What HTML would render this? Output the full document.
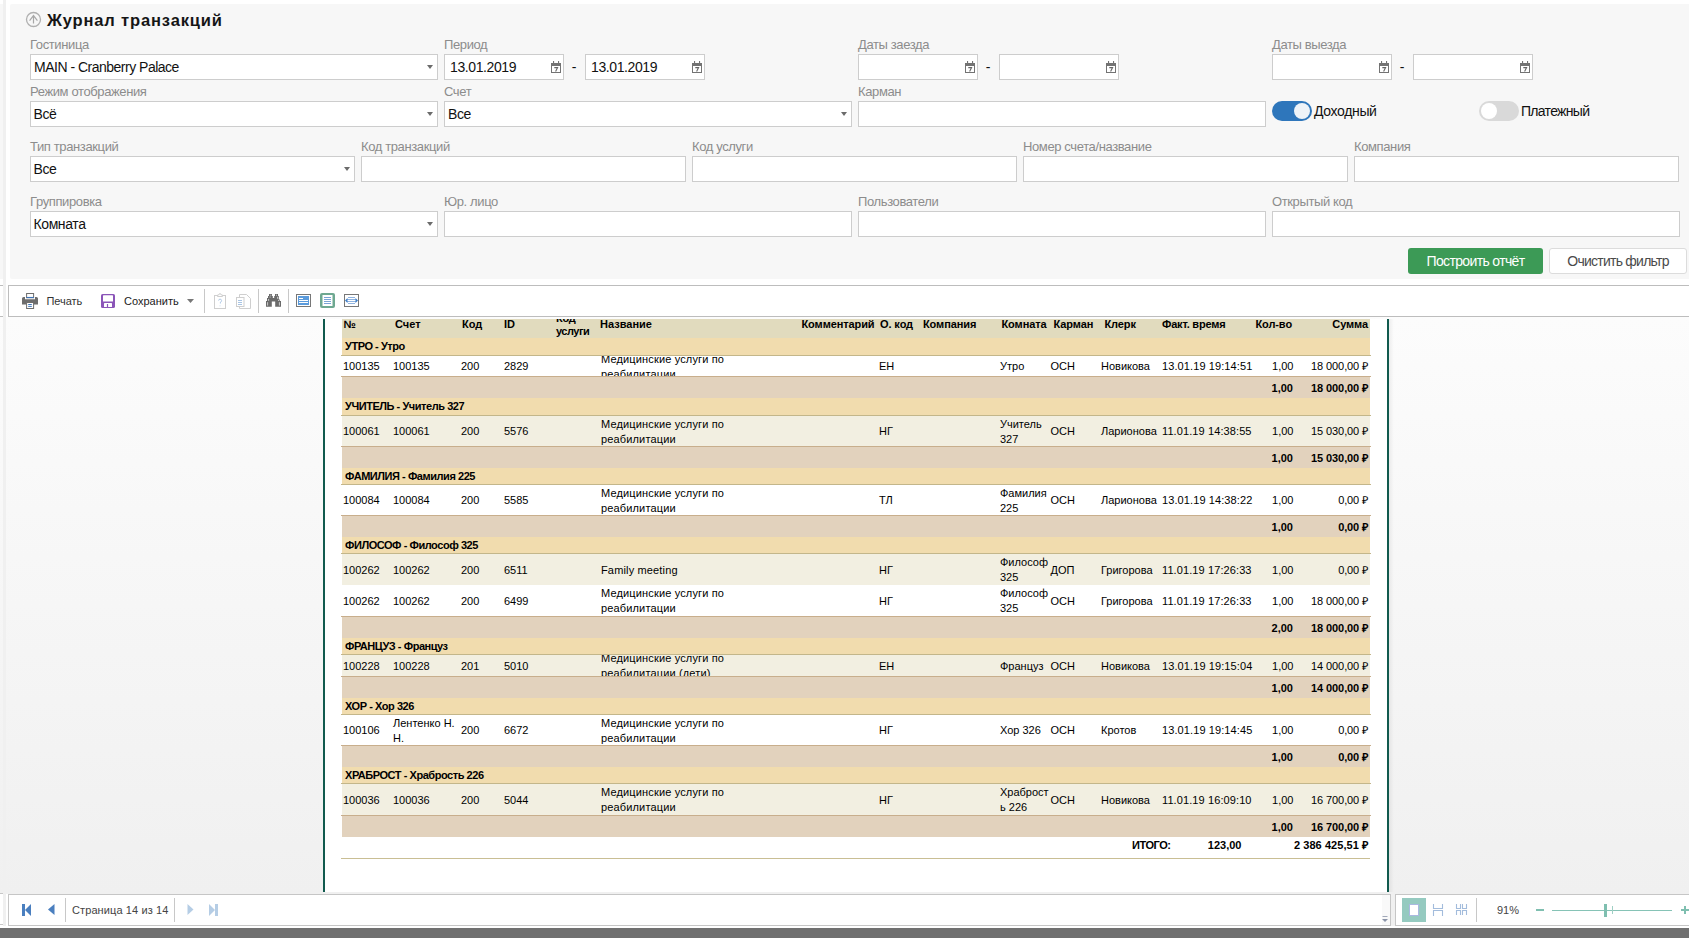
<!DOCTYPE html>
<html><head><meta charset="utf-8"><title>Журнал транзакций</title>
<style>
html,body{margin:0;padding:0;}
body{width:1689px;height:938px;overflow:hidden;position:relative;background:#fff;font-family:"Liberation Sans",sans-serif;}
.t{position:absolute;white-space:nowrap;}
.r{position:absolute;box-sizing:border-box;}
svg{position:absolute;overflow:visible;}
</style></head><body>

<div class="r" style="left:0px;top:4px;width:3px;height:275px;background:#f7f7f7"></div>
<div class="r" style="left:3px;top:0px;width:3px;height:938px;background:#f0f0f0"></div>
<div class="r" style="left:0px;top:317px;width:3px;height:577px;background:linear-gradient(#fcfcfc,#f0f0f0)"></div>
<div class="r" style="left:0px;top:285px;width:3px;height:1px;background:#bdbdbd"></div>
<div class="r" style="left:0px;top:316px;width:3px;height:1px;background:#bdbdbd"></div>
<div class="r" style="left:0px;top:893px;width:3px;height:1px;background:#c6c6c6"></div>
<div class="r" style="left:0px;top:924px;width:3px;height:1px;background:#c6c6c6"></div>
<div class="r" style="left:10px;top:4px;width:1679px;height:275px;background:#f7f7f7;border-radius:2px 0 0 2px"></div>
<svg style="left:25px;top:11px" width="17" height="17" viewBox="0 0 17 17"><circle cx="8.5" cy="8.5" r="7" fill="none" stroke="#b0b0b0" stroke-width="1.3"/><path d="M8.5 4.6V12.5 M4.6 9.6 L8.5 4.6 L12.4 9.6" fill="none" stroke="#a8a8a8" stroke-width="1.2"/></svg>
<div class="t" style="left:47px;top:9.78px;font-size:16.5px;line-height:21px;font-weight:700;color:#151515;letter-spacing:0.85px;">Журнал транзакций</div>
<div class="t" style="left:30px;top:36.00px;font-size:13px;line-height:17px;font-weight:400;color:#8c8c8c;letter-spacing:-0.38px;">Гостиница</div>
<div class="r" style="left:30px;top:54px;width:408px;height:26px;background:#fff;border:1px solid #cdcdcd"></div>
<svg style="left:427px;top:64.5px" width="6" height="4" viewBox="0 0 6 4"><path d="M0 0H6L3 4Z" fill="#6b6b6b"/></svg>
<div class="t" style="left:34px;top:58.15px;font-size:14px;line-height:18px;font-weight:400;color:#111;letter-spacing:-0.5px;">MAIN - Cranberry Palace</div>
<div class="t" style="left:444px;top:36.00px;font-size:13px;line-height:17px;font-weight:400;color:#8c8c8c;letter-spacing:-0.38px;">Период</div>
<div class="r" style="left:444px;top:54px;width:120px;height:26px;background:#fff;border:1px solid #cdcdcd"></div>
<div class="t" style="left:450px;top:58.15px;font-size:14px;line-height:18px;font-weight:400;color:#111;letter-spacing:-0.4px;">13.01.2019</div>
<svg style="left:551px;top:61px" width="10" height="12" viewBox="0 0 10 12"><rect x="0.5" y="2.5" width="9" height="9" fill="none" stroke="#737373" stroke-width="1"/><rect x="0" y="3" width="10" height="2" fill="#737373"/><rect x="2" y="0" width="1.1" height="3" fill="#737373"/><rect x="7" y="0" width="1.1" height="3" fill="#737373"/><rect x="4.5" y="2" width="1" height="1" fill="#737373"/><path d="M3.3 6.6H6.6L4.6 10.6" fill="none" stroke="#666" stroke-width="1.1"/></svg>
<div class="t" style="left:274px;width:600px;text-align:center;top:58.15px;font-size:14px;line-height:18px;font-weight:400;color:#111;letter-spacing:0px;">-</div>
<div class="r" style="left:585px;top:54px;width:120px;height:26px;background:#fff;border:1px solid #cdcdcd"></div>
<div class="t" style="left:591px;top:58.15px;font-size:14px;line-height:18px;font-weight:400;color:#111;letter-spacing:-0.4px;">13.01.2019</div>
<svg style="left:692px;top:61px" width="10" height="12" viewBox="0 0 10 12"><rect x="0.5" y="2.5" width="9" height="9" fill="none" stroke="#737373" stroke-width="1"/><rect x="0" y="3" width="10" height="2" fill="#737373"/><rect x="2" y="0" width="1.1" height="3" fill="#737373"/><rect x="7" y="0" width="1.1" height="3" fill="#737373"/><rect x="4.5" y="2" width="1" height="1" fill="#737373"/><path d="M3.3 6.6H6.6L4.6 10.6" fill="none" stroke="#666" stroke-width="1.1"/></svg>
<div class="t" style="left:858px;top:36.00px;font-size:13px;line-height:17px;font-weight:400;color:#8c8c8c;letter-spacing:-0.38px;">Даты заезда</div>
<div class="r" style="left:858px;top:54px;width:120px;height:26px;background:#fff;border:1px solid #cdcdcd"></div>
<svg style="left:965px;top:61px" width="10" height="12" viewBox="0 0 10 12"><rect x="0.5" y="2.5" width="9" height="9" fill="none" stroke="#737373" stroke-width="1"/><rect x="0" y="3" width="10" height="2" fill="#737373"/><rect x="2" y="0" width="1.1" height="3" fill="#737373"/><rect x="7" y="0" width="1.1" height="3" fill="#737373"/><rect x="4.5" y="2" width="1" height="1" fill="#737373"/><path d="M3.3 6.6H6.6L4.6 10.6" fill="none" stroke="#666" stroke-width="1.1"/></svg>
<div class="t" style="left:688px;width:600px;text-align:center;top:58.15px;font-size:14px;line-height:18px;font-weight:400;color:#111;letter-spacing:0px;">-</div>
<div class="r" style="left:999px;top:54px;width:120px;height:26px;background:#fff;border:1px solid #cdcdcd"></div>
<svg style="left:1106px;top:61px" width="10" height="12" viewBox="0 0 10 12"><rect x="0.5" y="2.5" width="9" height="9" fill="none" stroke="#737373" stroke-width="1"/><rect x="0" y="3" width="10" height="2" fill="#737373"/><rect x="2" y="0" width="1.1" height="3" fill="#737373"/><rect x="7" y="0" width="1.1" height="3" fill="#737373"/><rect x="4.5" y="2" width="1" height="1" fill="#737373"/><path d="M3.3 6.6H6.6L4.6 10.6" fill="none" stroke="#666" stroke-width="1.1"/></svg>
<div class="t" style="left:1272px;top:36.00px;font-size:13px;line-height:17px;font-weight:400;color:#8c8c8c;letter-spacing:-0.38px;">Даты выезда</div>
<div class="r" style="left:1272px;top:54px;width:120px;height:26px;background:#fff;border:1px solid #cdcdcd"></div>
<svg style="left:1379px;top:61px" width="10" height="12" viewBox="0 0 10 12"><rect x="0.5" y="2.5" width="9" height="9" fill="none" stroke="#737373" stroke-width="1"/><rect x="0" y="3" width="10" height="2" fill="#737373"/><rect x="2" y="0" width="1.1" height="3" fill="#737373"/><rect x="7" y="0" width="1.1" height="3" fill="#737373"/><rect x="4.5" y="2" width="1" height="1" fill="#737373"/><path d="M3.3 6.6H6.6L4.6 10.6" fill="none" stroke="#666" stroke-width="1.1"/></svg>
<div class="t" style="left:1102px;width:600px;text-align:center;top:58.15px;font-size:14px;line-height:18px;font-weight:400;color:#111;letter-spacing:0px;">-</div>
<div class="r" style="left:1413px;top:54px;width:120px;height:26px;background:#fff;border:1px solid #cdcdcd"></div>
<svg style="left:1520px;top:61px" width="10" height="12" viewBox="0 0 10 12"><rect x="0.5" y="2.5" width="9" height="9" fill="none" stroke="#737373" stroke-width="1"/><rect x="0" y="3" width="10" height="2" fill="#737373"/><rect x="2" y="0" width="1.1" height="3" fill="#737373"/><rect x="7" y="0" width="1.1" height="3" fill="#737373"/><rect x="4.5" y="2" width="1" height="1" fill="#737373"/><path d="M3.3 6.6H6.6L4.6 10.6" fill="none" stroke="#666" stroke-width="1.1"/></svg>
<div class="t" style="left:30px;top:83.00px;font-size:13px;line-height:17px;font-weight:400;color:#8c8c8c;letter-spacing:-0.38px;">Режим отображения</div>
<div class="r" style="left:30px;top:101px;width:408px;height:26px;background:#fff;border:1px solid #cdcdcd"></div>
<svg style="left:427px;top:111.5px" width="6" height="4" viewBox="0 0 6 4"><path d="M0 0H6L3 4Z" fill="#6b6b6b"/></svg>
<div class="t" style="left:33.5px;top:105.15px;font-size:14px;line-height:18px;font-weight:400;color:#111;letter-spacing:-0.4px;">Всё</div>
<div class="t" style="left:444px;top:83.00px;font-size:13px;line-height:17px;font-weight:400;color:#8c8c8c;letter-spacing:-0.38px;">Счет</div>
<div class="r" style="left:444px;top:101px;width:408px;height:26px;background:#fff;border:1px solid #cdcdcd"></div>
<svg style="left:841px;top:111.5px" width="6" height="4" viewBox="0 0 6 4"><path d="M0 0H6L3 4Z" fill="#6b6b6b"/></svg>
<div class="t" style="left:448px;top:105.15px;font-size:14px;line-height:18px;font-weight:400;color:#111;letter-spacing:-0.4px;">Все</div>
<div class="t" style="left:858px;top:83.00px;font-size:13px;line-height:17px;font-weight:400;color:#8c8c8c;letter-spacing:-0.38px;">Карман</div>
<div class="r" style="left:858px;top:101px;width:408px;height:26px;background:#fff;border:1px solid #cdcdcd"></div>
<div class="r" style="left:1272px;top:101px;width:40px;height:20px;background:#2e76bb;border-radius:10px"></div>
<div class="r" style="left:1294px;top:103px;width:16px;height:16px;background:#eef3f8;border-radius:50%"></div>
<div class="t" style="left:1314px;top:102.15px;font-size:14px;line-height:18px;font-weight:400;color:#111;letter-spacing:-0.35px;">Доходный</div>
<div class="r" style="left:1479px;top:101px;width:40px;height:20px;background:#d9d9d9;border-radius:10px"></div>
<div class="r" style="left:1481px;top:103px;width:16px;height:16px;background:#fff;border-radius:50%"></div>
<div class="t" style="left:1521px;top:102.15px;font-size:14px;line-height:18px;font-weight:400;color:#111;letter-spacing:-0.7px;">Платежный</div>
<div class="t" style="left:30px;top:138.00px;font-size:13px;line-height:17px;font-weight:400;color:#8c8c8c;letter-spacing:-0.38px;">Тип транзакций</div>
<div class="r" style="left:30px;top:156px;width:325px;height:26px;background:#fff;border:1px solid #cdcdcd"></div>
<svg style="left:344px;top:166.5px" width="6" height="4" viewBox="0 0 6 4"><path d="M0 0H6L3 4Z" fill="#6b6b6b"/></svg>
<div class="t" style="left:33.5px;top:160.15px;font-size:14px;line-height:18px;font-weight:400;color:#111;letter-spacing:-0.4px;">Все</div>
<div class="t" style="left:361px;top:138.00px;font-size:13px;line-height:17px;font-weight:400;color:#8c8c8c;letter-spacing:-0.38px;">Код транзакций</div>
<div class="r" style="left:361px;top:156px;width:325px;height:26px;background:#fff;border:1px solid #cdcdcd"></div>
<div class="t" style="left:692px;top:138.00px;font-size:13px;line-height:17px;font-weight:400;color:#8c8c8c;letter-spacing:-0.38px;">Код услуги</div>
<div class="r" style="left:692px;top:156px;width:325px;height:26px;background:#fff;border:1px solid #cdcdcd"></div>
<div class="t" style="left:1023px;top:138.00px;font-size:13px;line-height:17px;font-weight:400;color:#8c8c8c;letter-spacing:-0.38px;">Номер счета/название</div>
<div class="r" style="left:1023px;top:156px;width:325px;height:26px;background:#fff;border:1px solid #cdcdcd"></div>
<div class="t" style="left:1354px;top:138.00px;font-size:13px;line-height:17px;font-weight:400;color:#8c8c8c;letter-spacing:-0.38px;">Компания</div>
<div class="r" style="left:1354px;top:156px;width:325px;height:26px;background:#fff;border:1px solid #cdcdcd"></div>
<div class="t" style="left:30px;top:193.00px;font-size:13px;line-height:17px;font-weight:400;color:#8c8c8c;letter-spacing:-0.38px;">Группировка</div>
<div class="r" style="left:30px;top:211px;width:408px;height:26px;background:#fff;border:1px solid #cdcdcd"></div>
<svg style="left:427px;top:221.5px" width="6" height="4" viewBox="0 0 6 4"><path d="M0 0H6L3 4Z" fill="#6b6b6b"/></svg>
<div class="t" style="left:33.5px;top:215.15px;font-size:14px;line-height:18px;font-weight:400;color:#111;letter-spacing:-0.4px;">Комната</div>
<div class="t" style="left:444px;top:193.00px;font-size:13px;line-height:17px;font-weight:400;color:#8c8c8c;letter-spacing:-0.38px;">Юр. лицо</div>
<div class="r" style="left:444px;top:211px;width:408px;height:26px;background:#fff;border:1px solid #cdcdcd"></div>
<div class="t" style="left:858px;top:193.00px;font-size:13px;line-height:17px;font-weight:400;color:#8c8c8c;letter-spacing:-0.38px;">Пользователи</div>
<div class="r" style="left:858px;top:211px;width:408px;height:26px;background:#fff;border:1px solid #cdcdcd"></div>
<div class="t" style="left:1272px;top:193.00px;font-size:13px;line-height:17px;font-weight:400;color:#8c8c8c;letter-spacing:-0.38px;">Открытый код</div>
<div class="r" style="left:1272px;top:211px;width:408px;height:26px;background:#fff;border:1px solid #cdcdcd"></div>
<div class="r" style="left:1408px;top:248px;width:135px;height:26px;background:#3c9a56;border-radius:3px"></div>
<div class="t" style="left:1175.5px;width:600px;text-align:center;top:252.15px;font-size:14px;line-height:18px;font-weight:400;color:#fff;letter-spacing:-0.64px;">Построить отчёт</div>
<div class="r" style="left:1549px;top:248px;width:138px;height:26px;background:#fff;border:1px solid #dcdcdc;border-radius:3px"></div>
<div class="t" style="left:1318px;width:600px;text-align:center;top:252.15px;font-size:14px;line-height:18px;font-weight:400;color:#4a4a4a;letter-spacing:-0.75px;">Очистить фильтр</div>
<div class="r" style="left:8px;top:285px;width:1693px;height:32px;background:#fff;border:1px solid #bdbdbd"></div>
<svg style="left:22px;top:293px" width="16" height="16" viewBox="0 0 16 16"><path d="M0 11.6V5.6Q0 4 1.6 4H3V6.2H13V4H14.4Q16 4 16 5.6V11.6Z" fill="#6d6d6d"/><rect x="4.6" y="0.5" width="7" height="4.2" fill="#fff" stroke="#6d6d6d" stroke-width="1"/><path d="M4.4 4.5H11.8" stroke="#3d74b8" stroke-width="1.1"/><rect x="4.6" y="9.5" width="7" height="6" fill="#fff" stroke="#6d6d6d" stroke-width="1"/><path d="M6.2 11.5H9.8 M6.2 13.4H9.8" stroke="#3d74b8" stroke-width="1"/></svg>
<div class="t" style="left:46.5px;top:294.19px;font-size:11px;line-height:14px;font-weight:400;color:#333;letter-spacing:-0.05px;">Печать</div>
<svg style="left:101px;top:294px" width="14" height="14" viewBox="0 0 14 14"><rect x="0" y="0" width="14" height="14" rx="1.6" fill="#8b55b8"/><rect x="2" y="1.2" width="10" height="6.4" rx="0.6" fill="#fff"/><rect x="3" y="9" width="8" height="4" rx="0.5" fill="#fff"/><rect x="5.9" y="10" width="1.2" height="3" fill="#8b55b8"/></svg>
<div class="t" style="left:124px;top:294.19px;font-size:11px;line-height:14px;font-weight:400;color:#222;letter-spacing:0px;">Сохранить</div>
<svg style="left:187px;top:299px" width="7" height="4" viewBox="0 0 7 4"><path d="M0 0H7L3.5 4Z" fill="#777"/></svg>
<div class="r" style="left:204px;top:289px;width:1px;height:24px;background:#c8c8c8"></div>
<svg style="left:214px;top:293px" width="12" height="16" viewBox="0 0 12 16"><rect x="0.5" y="2.5" width="11" height="13" fill="#fff" stroke="#cfcfcf" stroke-width="1"/><path d="M3.5 3.5H8.5V2H7.3A1.3 1.3 0 0 0 4.7 2H3.5Z" fill="#fff" stroke="#cfcfcf" stroke-width="1"/><path d="M4.6 7.6A1.5 1.5 0 1 1 6.4 9.1V10.5 M6 12.6V13.2" fill="none" stroke="#a8c4e4" stroke-width="0.9"/></svg>
<svg style="left:236px;top:294px" width="15" height="15" viewBox="0 0 15 15"><path d="M3.5 0.5H10.5L14.5 4.5V14.5H3.5Z" fill="#fff" stroke="#cfcfcf" stroke-width="1"/><rect x="0.5" y="3.5" width="7.5" height="9" fill="#fff" stroke="#cfcfcf" stroke-width="1"/><path d="M2 6.5H6 M2 8.5H6 M2 10.5H6" stroke="#a8c4e4" stroke-width="1"/></svg>
<div class="r" style="left:258px;top:289px;width:1px;height:24px;background:#c8c8c8"></div>
<svg style="left:266px;top:294px" width="15" height="13" viewBox="0 0 15 13"><path d="M0 12.7V7H1V4H2V2H3V0H6V2H6.8V4H8.2V2H9V0H12V2H12.8V5.5H13.8V7H15V12.7H9.2V7.6H5.8V12.7Z" fill="#6a6a6a"/><path d="M1.6 8.2V11.6 M2.6 5V6.8 M13.4 8.2V11.6 M11.6 2.8V4.8" stroke="#d8d8d8" stroke-width="0.9"/><rect x="3.6" y="2.6" width="1" height="1" fill="#d0d0d0"/><rect x="4.3" y="0.7" width="1" height="1" fill="#d0d0d0"/><rect x="10" y="0.7" width="1" height="1" fill="#d0d0d0"/><rect x="12.1" y="6" width="1" height="1" fill="#d0d0d0"/></svg>
<div class="r" style="left:288px;top:289px;width:1px;height:24px;background:#c8c8c8"></div>
<svg style="left:296px;top:294px" width="15" height="13" viewBox="0 0 15 13"><rect x="0.5" y="0.5" width="14" height="12" fill="#fff" stroke="#777" stroke-width="1"/><rect x="2" y="2" width="11" height="9" fill="#5b9bdc"/><path d="M3 4.5H7 M3 6.5H12 M3 8.5H12" stroke="#fff" stroke-width="1"/></svg>
<svg style="left:320px;top:293px" width="15" height="15" viewBox="0 0 15 15"><rect x="0" y="0" width="15" height="15" rx="2" fill="#6ea891"/><rect x="2.5" y="2" width="10" height="11" fill="#fff"/><path d="M4 4.5H11 M4 6.5H11 M4 8.5H11 M4 10.5H11" stroke="#7aa4d6" stroke-width="1"/></svg>
<svg style="left:344px;top:294px" width="15" height="13" viewBox="0 0 15 13"><rect x="0.5" y="0.5" width="14" height="12" fill="#fff" stroke="#777" stroke-width="1"/><path d="M4 3.5H11 M3 5.5H12 M3 7.5H12 M4 9.5H11" stroke="#8fb3e0" stroke-width="1"/><path d="M1 6.5L3.5 4V9Z M14 6.5L11.5 4V9Z" fill="#3f7fc9"/></svg>
<div class="r" style="left:6px;top:317px;width:1683px;height:577px;background:linear-gradient(#fcfcfc,#f0f0f0)"></div>
<div class="r" style="left:1389px;top:319px;width:5px;height:573px;background:linear-gradient(90deg,rgba(0,0,0,0.06),rgba(0,0,0,0))"></div>
<div class="r" style="left:323px;top:319px;width:1066px;height:573px;background:#fff;border-left:2px solid #115a4e;border-right:2px solid #115a4e"></div>
<div class="r" style="left:342px;top:319px;width:1028px;height:19px;background:#e1dbbe"></div>
<div class="t" style="left:343.5px;top:317.19px;font-size:11px;line-height:14px;font-weight:700;color:#000;letter-spacing:0px;">№</div>
<div class="t" style="left:395px;top:317.19px;font-size:11px;line-height:14px;font-weight:700;color:#000;letter-spacing:0px;">Счет</div>
<div class="t" style="left:462px;top:317.19px;font-size:11px;line-height:14px;font-weight:700;color:#000;letter-spacing:0px;">Код</div>
<div class="t" style="left:504px;top:317.19px;font-size:11px;line-height:14px;font-weight:700;color:#000;letter-spacing:0px;">ID</div>
<div style="position:absolute;left:550px;top:319px;width:46px;height:19px;overflow:hidden">
<div class="t" style="left:6px;top:-8.21px;font-size:11px;line-height:14px;font-weight:700;color:#000;letter-spacing:-0.3px;">Код</div>
</div>
<div class="t" style="left:556px;top:323.79px;font-size:11px;line-height:14px;font-weight:700;color:#000;letter-spacing:-0.5px;">услуги</div>
<div class="t" style="left:600px;top:317.19px;font-size:11px;line-height:14px;font-weight:700;color:#000;letter-spacing:0px;">Название</div>
<div class="t" style="left:801.5px;top:317.19px;font-size:11px;line-height:14px;font-weight:700;color:#000;letter-spacing:-0.1px;">Комментарий</div>
<div class="t" style="left:880px;top:317.19px;font-size:11px;line-height:14px;font-weight:700;color:#000;letter-spacing:-0.1px;">О. код</div>
<div class="t" style="left:923px;top:317.19px;font-size:11px;line-height:14px;font-weight:700;color:#000;letter-spacing:-0.1px;">Компания</div>
<div class="t" style="left:1001.5px;top:317.19px;font-size:11px;line-height:14px;font-weight:700;color:#000;letter-spacing:-0.1px;">Комната</div>
<div class="t" style="left:1053.5px;top:317.19px;font-size:11px;line-height:14px;font-weight:700;color:#000;letter-spacing:-0.1px;">Карман</div>
<div class="t" style="left:1104.5px;top:317.19px;font-size:11px;line-height:14px;font-weight:700;color:#000;letter-spacing:-0.1px;">Клерк</div>
<div class="t" style="left:1162px;top:317.19px;font-size:11px;line-height:14px;font-weight:700;color:#000;letter-spacing:-0.2px;">Факт. время</div>
<div class="t" style="right:397px;top:317.19px;font-size:11px;line-height:14px;font-weight:700;color:#000;letter-spacing:-0.1px;">Кол-во</div>
<div class="t" style="right:321px;top:317.19px;font-size:11px;line-height:14px;font-weight:700;color:#000;letter-spacing:-0.1px;">Сумма</div>
<div class="r" style="left:342px;top:338px;width:1028px;height:18px;background:#f1dcae"></div>
<div class="r" style="left:341px;top:355px;width:1030px;height:1px;background:#c3b68a"></div>
<div class="t" style="left:345px;top:339.39px;font-size:11px;line-height:14px;font-weight:700;color:#000;letter-spacing:-0.45px;">УТРО - Утро</div>
<div class="r" style="left:342px;top:356px;width:1028px;height:21px;background:#fff"></div>
<div class="r" style="left:341px;top:376px;width:1030px;height:1px;background:#c8ae8c"></div>
<div class="t" style="left:343px;top:359.19px;font-size:11px;line-height:14px;font-weight:400;color:#000;letter-spacing:0px;">100135</div>
<div class="t" style="left:393px;top:359.19px;font-size:11px;line-height:14px;font-weight:400;color:#000;letter-spacing:0px;">100135</div>
<div class="t" style="left:461px;top:359.19px;font-size:11px;line-height:14px;font-weight:400;color:#000;letter-spacing:0px;">200</div>
<div class="t" style="left:504px;top:359.19px;font-size:11px;line-height:14px;font-weight:400;color:#000;letter-spacing:0px;">2829</div>
<div style="position:absolute;left:598px;top:356px;width:200px;height:20px;overflow:hidden">
<div class="t" style="left:3px;top:-4.31px;font-size:11px;line-height:14px;font-weight:400;color:#000;letter-spacing:0.15px;">Медицинские услуги по</div>
<div class="t" style="left:3px;top:10.69px;font-size:11px;line-height:14px;font-weight:400;color:#000;letter-spacing:0.15px;">реабилитации</div>
</div>
<div class="t" style="left:879px;top:359.19px;font-size:11px;line-height:14px;font-weight:400;color:#000;letter-spacing:0px;">ЕН</div>
<div class="t" style="left:1000px;top:359.19px;font-size:11px;line-height:14px;font-weight:400;color:#000;letter-spacing:0px;">Утро</div>
<div class="t" style="left:1050.5px;top:359.19px;font-size:11px;line-height:14px;font-weight:400;color:#000;letter-spacing:0px;">ОСН</div>
<div class="t" style="left:1101px;top:359.19px;font-size:11px;line-height:14px;font-weight:400;color:#000;letter-spacing:0px;">Новикова</div>
<div class="t" style="left:1162px;top:359.19px;font-size:11px;line-height:14px;font-weight:400;color:#000;letter-spacing:0.1px;">13.01.19 19:14:51</div>
<div class="t" style="right:395.5px;top:359.19px;font-size:11px;line-height:14px;font-weight:400;color:#000;letter-spacing:0px;">1,00</div>
<div class="t" style="right:321px;top:359.19px;font-size:11px;line-height:14px;font-weight:400;color:#000;letter-spacing:-0.1px;">18 000,00 ₽</div>
<div class="r" style="left:342px;top:377px;width:1028px;height:21px;background:#e2d2bd"></div>
<div class="t" style="right:396px;top:381.19px;font-size:11px;line-height:14px;font-weight:700;color:#000;letter-spacing:0px;">1,00</div>
<div class="t" style="right:321px;top:381.19px;font-size:11px;line-height:14px;font-weight:700;color:#000;letter-spacing:-0.1px;">18 000,00 ₽</div>
<div class="r" style="left:342px;top:398px;width:1028px;height:18px;background:#f1dcae"></div>
<div class="r" style="left:341px;top:415px;width:1030px;height:1px;background:#c3b68a"></div>
<div class="t" style="left:345px;top:399.39px;font-size:11px;line-height:14px;font-weight:700;color:#000;letter-spacing:-0.45px;">УЧИТЕЛЬ - Учитель 327</div>
<div class="r" style="left:342px;top:416px;width:1028px;height:31px;background:#f2efe1"></div>
<div class="r" style="left:341px;top:446px;width:1030px;height:1px;background:#c8ae8c"></div>
<div class="t" style="left:343px;top:424.19px;font-size:11px;line-height:14px;font-weight:400;color:#000;letter-spacing:0px;">100061</div>
<div class="t" style="left:393px;top:424.19px;font-size:11px;line-height:14px;font-weight:400;color:#000;letter-spacing:0px;">100061</div>
<div class="t" style="left:461px;top:424.19px;font-size:11px;line-height:14px;font-weight:400;color:#000;letter-spacing:0px;">200</div>
<div class="t" style="left:504px;top:424.19px;font-size:11px;line-height:14px;font-weight:400;color:#000;letter-spacing:0px;">5576</div>
<div class="t" style="left:601px;top:416.69px;font-size:11px;line-height:14px;font-weight:400;color:#000;letter-spacing:0.15px;">Медицинские услуги по</div>
<div class="t" style="left:601px;top:431.69px;font-size:11px;line-height:14px;font-weight:400;color:#000;letter-spacing:0.15px;">реабилитации</div>
<div class="t" style="left:879px;top:424.19px;font-size:11px;line-height:14px;font-weight:400;color:#000;letter-spacing:0px;">НГ</div>
<div class="t" style="left:1000px;top:416.69px;font-size:11px;line-height:14px;font-weight:400;color:#000;letter-spacing:0px;">Учитель</div>
<div class="t" style="left:1000px;top:431.69px;font-size:11px;line-height:14px;font-weight:400;color:#000;letter-spacing:0px;">327</div>
<div class="t" style="left:1050.5px;top:424.19px;font-size:11px;line-height:14px;font-weight:400;color:#000;letter-spacing:0px;">ОСН</div>
<div class="t" style="left:1101px;top:424.19px;font-size:11px;line-height:14px;font-weight:400;color:#000;letter-spacing:0px;">Ларионова</div>
<div class="t" style="left:1162px;top:424.19px;font-size:11px;line-height:14px;font-weight:400;color:#000;letter-spacing:0.1px;">11.01.19 14:38:55</div>
<div class="t" style="right:395.5px;top:424.19px;font-size:11px;line-height:14px;font-weight:400;color:#000;letter-spacing:0px;">1,00</div>
<div class="t" style="right:321px;top:424.19px;font-size:11px;line-height:14px;font-weight:400;color:#000;letter-spacing:-0.1px;">15 030,00 ₽</div>
<div class="r" style="left:342px;top:447px;width:1028px;height:21px;background:#e2d2bd"></div>
<div class="t" style="right:396px;top:451.19px;font-size:11px;line-height:14px;font-weight:700;color:#000;letter-spacing:0px;">1,00</div>
<div class="t" style="right:321px;top:451.19px;font-size:11px;line-height:14px;font-weight:700;color:#000;letter-spacing:-0.1px;">15 030,00 ₽</div>
<div class="r" style="left:342px;top:468px;width:1028px;height:17px;background:#f1dcae"></div>
<div class="r" style="left:341px;top:484px;width:1030px;height:1px;background:#c3b68a"></div>
<div class="t" style="left:345px;top:468.89px;font-size:11px;line-height:14px;font-weight:700;color:#000;letter-spacing:-0.45px;">ФАМИЛИЯ - Фамилия 225</div>
<div class="r" style="left:342px;top:485px;width:1028px;height:31px;background:#fff"></div>
<div class="r" style="left:341px;top:515px;width:1030px;height:1px;background:#c8ae8c"></div>
<div class="t" style="left:343px;top:493.19px;font-size:11px;line-height:14px;font-weight:400;color:#000;letter-spacing:0px;">100084</div>
<div class="t" style="left:393px;top:493.19px;font-size:11px;line-height:14px;font-weight:400;color:#000;letter-spacing:0px;">100084</div>
<div class="t" style="left:461px;top:493.19px;font-size:11px;line-height:14px;font-weight:400;color:#000;letter-spacing:0px;">200</div>
<div class="t" style="left:504px;top:493.19px;font-size:11px;line-height:14px;font-weight:400;color:#000;letter-spacing:0px;">5585</div>
<div class="t" style="left:601px;top:485.69px;font-size:11px;line-height:14px;font-weight:400;color:#000;letter-spacing:0.15px;">Медицинские услуги по</div>
<div class="t" style="left:601px;top:500.69px;font-size:11px;line-height:14px;font-weight:400;color:#000;letter-spacing:0.15px;">реабилитации</div>
<div class="t" style="left:879px;top:493.19px;font-size:11px;line-height:14px;font-weight:400;color:#000;letter-spacing:0px;">ТЛ</div>
<div class="t" style="left:1000px;top:485.69px;font-size:11px;line-height:14px;font-weight:400;color:#000;letter-spacing:0px;">Фамилия</div>
<div class="t" style="left:1000px;top:500.69px;font-size:11px;line-height:14px;font-weight:400;color:#000;letter-spacing:0px;">225</div>
<div class="t" style="left:1050.5px;top:493.19px;font-size:11px;line-height:14px;font-weight:400;color:#000;letter-spacing:0px;">ОСН</div>
<div class="t" style="left:1101px;top:493.19px;font-size:11px;line-height:14px;font-weight:400;color:#000;letter-spacing:0px;">Ларионова</div>
<div class="t" style="left:1162px;top:493.19px;font-size:11px;line-height:14px;font-weight:400;color:#000;letter-spacing:0.1px;">13.01.19 14:38:22</div>
<div class="t" style="right:395.5px;top:493.19px;font-size:11px;line-height:14px;font-weight:400;color:#000;letter-spacing:0px;">1,00</div>
<div class="t" style="right:321px;top:493.19px;font-size:11px;line-height:14px;font-weight:400;color:#000;letter-spacing:-0.1px;">0,00 ₽</div>
<div class="r" style="left:342px;top:516px;width:1028px;height:21px;background:#e2d2bd"></div>
<div class="t" style="right:396px;top:520.19px;font-size:11px;line-height:14px;font-weight:700;color:#000;letter-spacing:0px;">1,00</div>
<div class="t" style="right:321px;top:520.19px;font-size:11px;line-height:14px;font-weight:700;color:#000;letter-spacing:-0.1px;">0,00 ₽</div>
<div class="r" style="left:342px;top:537px;width:1028px;height:17px;background:#f1dcae"></div>
<div class="r" style="left:341px;top:553px;width:1030px;height:1px;background:#c3b68a"></div>
<div class="t" style="left:345px;top:537.89px;font-size:11px;line-height:14px;font-weight:700;color:#000;letter-spacing:-0.45px;">ФИЛОСОФ - Философ 325</div>
<div class="r" style="left:342px;top:554px;width:1028px;height:31px;background:#f2efe1"></div>
<div class="t" style="left:343px;top:562.69px;font-size:11px;line-height:14px;font-weight:400;color:#000;letter-spacing:0px;">100262</div>
<div class="t" style="left:393px;top:562.69px;font-size:11px;line-height:14px;font-weight:400;color:#000;letter-spacing:0px;">100262</div>
<div class="t" style="left:461px;top:562.69px;font-size:11px;line-height:14px;font-weight:400;color:#000;letter-spacing:0px;">200</div>
<div class="t" style="left:504px;top:562.69px;font-size:11px;line-height:14px;font-weight:400;color:#000;letter-spacing:0px;">6511</div>
<div class="t" style="left:601px;top:562.69px;font-size:11px;line-height:14px;font-weight:400;color:#000;letter-spacing:0.15px;">Family meeting</div>
<div class="t" style="left:879px;top:562.69px;font-size:11px;line-height:14px;font-weight:400;color:#000;letter-spacing:0px;">НГ</div>
<div class="t" style="left:1000px;top:555.19px;font-size:11px;line-height:14px;font-weight:400;color:#000;letter-spacing:0px;">Философ</div>
<div class="t" style="left:1000px;top:570.19px;font-size:11px;line-height:14px;font-weight:400;color:#000;letter-spacing:0px;">325</div>
<div class="t" style="left:1050.5px;top:562.69px;font-size:11px;line-height:14px;font-weight:400;color:#000;letter-spacing:0px;">ДОП</div>
<div class="t" style="left:1101px;top:562.69px;font-size:11px;line-height:14px;font-weight:400;color:#000;letter-spacing:0px;">Григорова</div>
<div class="t" style="left:1162px;top:562.69px;font-size:11px;line-height:14px;font-weight:400;color:#000;letter-spacing:0.1px;">11.01.19 17:26:33</div>
<div class="t" style="right:395.5px;top:562.69px;font-size:11px;line-height:14px;font-weight:400;color:#000;letter-spacing:0px;">1,00</div>
<div class="t" style="right:321px;top:562.69px;font-size:11px;line-height:14px;font-weight:400;color:#000;letter-spacing:-0.1px;">0,00 ₽</div>
<div class="r" style="left:342px;top:585px;width:1028px;height:32px;background:#fff"></div>
<div class="r" style="left:341px;top:616px;width:1030px;height:1px;background:#c8ae8c"></div>
<div class="t" style="left:343px;top:593.69px;font-size:11px;line-height:14px;font-weight:400;color:#000;letter-spacing:0px;">100262</div>
<div class="t" style="left:393px;top:593.69px;font-size:11px;line-height:14px;font-weight:400;color:#000;letter-spacing:0px;">100262</div>
<div class="t" style="left:461px;top:593.69px;font-size:11px;line-height:14px;font-weight:400;color:#000;letter-spacing:0px;">200</div>
<div class="t" style="left:504px;top:593.69px;font-size:11px;line-height:14px;font-weight:400;color:#000;letter-spacing:0px;">6499</div>
<div class="t" style="left:601px;top:586.19px;font-size:11px;line-height:14px;font-weight:400;color:#000;letter-spacing:0.15px;">Медицинские услуги по</div>
<div class="t" style="left:601px;top:601.19px;font-size:11px;line-height:14px;font-weight:400;color:#000;letter-spacing:0.15px;">реабилитации</div>
<div class="t" style="left:879px;top:593.69px;font-size:11px;line-height:14px;font-weight:400;color:#000;letter-spacing:0px;">НГ</div>
<div class="t" style="left:1000px;top:586.19px;font-size:11px;line-height:14px;font-weight:400;color:#000;letter-spacing:0px;">Философ</div>
<div class="t" style="left:1000px;top:601.19px;font-size:11px;line-height:14px;font-weight:400;color:#000;letter-spacing:0px;">325</div>
<div class="t" style="left:1050.5px;top:593.69px;font-size:11px;line-height:14px;font-weight:400;color:#000;letter-spacing:0px;">ОСН</div>
<div class="t" style="left:1101px;top:593.69px;font-size:11px;line-height:14px;font-weight:400;color:#000;letter-spacing:0px;">Григорова</div>
<div class="t" style="left:1162px;top:593.69px;font-size:11px;line-height:14px;font-weight:400;color:#000;letter-spacing:0.1px;">11.01.19 17:26:33</div>
<div class="t" style="right:395.5px;top:593.69px;font-size:11px;line-height:14px;font-weight:400;color:#000;letter-spacing:0px;">1,00</div>
<div class="t" style="right:321px;top:593.69px;font-size:11px;line-height:14px;font-weight:400;color:#000;letter-spacing:-0.1px;">18 000,00 ₽</div>
<div class="r" style="left:342px;top:617px;width:1028px;height:21px;background:#e2d2bd"></div>
<div class="t" style="right:396px;top:621.19px;font-size:11px;line-height:14px;font-weight:700;color:#000;letter-spacing:0px;">2,00</div>
<div class="t" style="right:321px;top:621.19px;font-size:11px;line-height:14px;font-weight:700;color:#000;letter-spacing:-0.1px;">18 000,00 ₽</div>
<div class="r" style="left:342px;top:638px;width:1028px;height:17px;background:#f1dcae"></div>
<div class="r" style="left:341px;top:654px;width:1030px;height:1px;background:#c3b68a"></div>
<div class="t" style="left:345px;top:638.89px;font-size:11px;line-height:14px;font-weight:700;color:#000;letter-spacing:-0.45px;">ФРАНЦУЗ - Француз</div>
<div class="r" style="left:342px;top:655px;width:1028px;height:22px;background:#f2efe1"></div>
<div class="r" style="left:341px;top:676px;width:1030px;height:1px;background:#c8ae8c"></div>
<div class="t" style="left:343px;top:658.69px;font-size:11px;line-height:14px;font-weight:400;color:#000;letter-spacing:0px;">100228</div>
<div class="t" style="left:393px;top:658.69px;font-size:11px;line-height:14px;font-weight:400;color:#000;letter-spacing:0px;">100228</div>
<div class="t" style="left:461px;top:658.69px;font-size:11px;line-height:14px;font-weight:400;color:#000;letter-spacing:0px;">201</div>
<div class="t" style="left:504px;top:658.69px;font-size:11px;line-height:14px;font-weight:400;color:#000;letter-spacing:0px;">5010</div>
<div style="position:absolute;left:598px;top:655px;width:200px;height:21px;overflow:hidden">
<div class="t" style="left:3px;top:-3.81px;font-size:11px;line-height:14px;font-weight:400;color:#000;letter-spacing:0.15px;">Медицинские услуги по</div>
<div class="t" style="left:3px;top:11.19px;font-size:11px;line-height:14px;font-weight:400;color:#000;letter-spacing:0.15px;">реабилитации (дети)</div>
</div>
<div class="t" style="left:879px;top:658.69px;font-size:11px;line-height:14px;font-weight:400;color:#000;letter-spacing:0px;">ЕН</div>
<div class="t" style="left:1000px;top:658.69px;font-size:11px;line-height:14px;font-weight:400;color:#000;letter-spacing:0px;">Француз</div>
<div class="t" style="left:1050.5px;top:658.69px;font-size:11px;line-height:14px;font-weight:400;color:#000;letter-spacing:0px;">ОСН</div>
<div class="t" style="left:1101px;top:658.69px;font-size:11px;line-height:14px;font-weight:400;color:#000;letter-spacing:0px;">Новикова</div>
<div class="t" style="left:1162px;top:658.69px;font-size:11px;line-height:14px;font-weight:400;color:#000;letter-spacing:0.1px;">13.01.19 19:15:04</div>
<div class="t" style="right:395.5px;top:658.69px;font-size:11px;line-height:14px;font-weight:400;color:#000;letter-spacing:0px;">1,00</div>
<div class="t" style="right:321px;top:658.69px;font-size:11px;line-height:14px;font-weight:400;color:#000;letter-spacing:-0.1px;">14 000,00 ₽</div>
<div class="r" style="left:342px;top:677px;width:1028px;height:21px;background:#e2d2bd"></div>
<div class="t" style="right:396px;top:681.19px;font-size:11px;line-height:14px;font-weight:700;color:#000;letter-spacing:0px;">1,00</div>
<div class="t" style="right:321px;top:681.19px;font-size:11px;line-height:14px;font-weight:700;color:#000;letter-spacing:-0.1px;">14 000,00 ₽</div>
<div class="r" style="left:342px;top:698px;width:1028px;height:17px;background:#f1dcae"></div>
<div class="r" style="left:341px;top:714px;width:1030px;height:1px;background:#c3b68a"></div>
<div class="t" style="left:345px;top:698.89px;font-size:11px;line-height:14px;font-weight:700;color:#000;letter-spacing:-0.45px;">ХОР - Хор 326</div>
<div class="r" style="left:342px;top:715px;width:1028px;height:31px;background:#fff"></div>
<div class="r" style="left:341px;top:745px;width:1030px;height:1px;background:#c8ae8c"></div>
<div class="t" style="left:343px;top:723.19px;font-size:11px;line-height:14px;font-weight:400;color:#000;letter-spacing:0px;">100106</div>
<div class="t" style="left:393px;top:715.69px;font-size:11px;line-height:14px;font-weight:400;color:#000;letter-spacing:0px;">Лентенко Н.</div>
<div class="t" style="left:393px;top:730.69px;font-size:11px;line-height:14px;font-weight:400;color:#000;letter-spacing:0px;">Н.</div>
<div class="t" style="left:461px;top:723.19px;font-size:11px;line-height:14px;font-weight:400;color:#000;letter-spacing:0px;">200</div>
<div class="t" style="left:504px;top:723.19px;font-size:11px;line-height:14px;font-weight:400;color:#000;letter-spacing:0px;">6672</div>
<div class="t" style="left:601px;top:715.69px;font-size:11px;line-height:14px;font-weight:400;color:#000;letter-spacing:0.15px;">Медицинские услуги по</div>
<div class="t" style="left:601px;top:730.69px;font-size:11px;line-height:14px;font-weight:400;color:#000;letter-spacing:0.15px;">реабилитации</div>
<div class="t" style="left:879px;top:723.19px;font-size:11px;line-height:14px;font-weight:400;color:#000;letter-spacing:0px;">НГ</div>
<div class="t" style="left:1000px;top:723.19px;font-size:11px;line-height:14px;font-weight:400;color:#000;letter-spacing:0px;">Хор 326</div>
<div class="t" style="left:1050.5px;top:723.19px;font-size:11px;line-height:14px;font-weight:400;color:#000;letter-spacing:0px;">ОСН</div>
<div class="t" style="left:1101px;top:723.19px;font-size:11px;line-height:14px;font-weight:400;color:#000;letter-spacing:0px;">Кротов</div>
<div class="t" style="left:1162px;top:723.19px;font-size:11px;line-height:14px;font-weight:400;color:#000;letter-spacing:0.1px;">13.01.19 19:14:45</div>
<div class="t" style="right:395.5px;top:723.19px;font-size:11px;line-height:14px;font-weight:400;color:#000;letter-spacing:0px;">1,00</div>
<div class="t" style="right:321px;top:723.19px;font-size:11px;line-height:14px;font-weight:400;color:#000;letter-spacing:-0.1px;">0,00 ₽</div>
<div class="r" style="left:342px;top:746px;width:1028px;height:21px;background:#e2d2bd"></div>
<div class="t" style="right:396px;top:750.19px;font-size:11px;line-height:14px;font-weight:700;color:#000;letter-spacing:0px;">1,00</div>
<div class="t" style="right:321px;top:750.19px;font-size:11px;line-height:14px;font-weight:700;color:#000;letter-spacing:-0.1px;">0,00 ₽</div>
<div class="r" style="left:342px;top:767px;width:1028px;height:17px;background:#f1dcae"></div>
<div class="r" style="left:341px;top:783px;width:1030px;height:1px;background:#c3b68a"></div>
<div class="t" style="left:345px;top:767.89px;font-size:11px;line-height:14px;font-weight:700;color:#000;letter-spacing:-0.45px;">ХРАБРОСТ - Храбрость 226</div>
<div class="r" style="left:342px;top:784px;width:1028px;height:32px;background:#f2efe1"></div>
<div class="r" style="left:341px;top:815px;width:1030px;height:1px;background:#c8ae8c"></div>
<div class="t" style="left:343px;top:792.69px;font-size:11px;line-height:14px;font-weight:400;color:#000;letter-spacing:0px;">100036</div>
<div class="t" style="left:393px;top:792.69px;font-size:11px;line-height:14px;font-weight:400;color:#000;letter-spacing:0px;">100036</div>
<div class="t" style="left:461px;top:792.69px;font-size:11px;line-height:14px;font-weight:400;color:#000;letter-spacing:0px;">200</div>
<div class="t" style="left:504px;top:792.69px;font-size:11px;line-height:14px;font-weight:400;color:#000;letter-spacing:0px;">5044</div>
<div class="t" style="left:601px;top:785.19px;font-size:11px;line-height:14px;font-weight:400;color:#000;letter-spacing:0.15px;">Медицинские услуги по</div>
<div class="t" style="left:601px;top:800.19px;font-size:11px;line-height:14px;font-weight:400;color:#000;letter-spacing:0.15px;">реабилитации</div>
<div class="t" style="left:879px;top:792.69px;font-size:11px;line-height:14px;font-weight:400;color:#000;letter-spacing:0px;">НГ</div>
<div class="t" style="left:1000px;top:785.19px;font-size:11px;line-height:14px;font-weight:400;color:#000;letter-spacing:0px;">Храброст</div>
<div class="t" style="left:1000px;top:800.19px;font-size:11px;line-height:14px;font-weight:400;color:#000;letter-spacing:0px;">ь 226</div>
<div class="t" style="left:1050.5px;top:792.69px;font-size:11px;line-height:14px;font-weight:400;color:#000;letter-spacing:0px;">ОСН</div>
<div class="t" style="left:1101px;top:792.69px;font-size:11px;line-height:14px;font-weight:400;color:#000;letter-spacing:0px;">Новикова</div>
<div class="t" style="left:1162px;top:792.69px;font-size:11px;line-height:14px;font-weight:400;color:#000;letter-spacing:0.1px;">11.01.19 16:09:10</div>
<div class="t" style="right:395.5px;top:792.69px;font-size:11px;line-height:14px;font-weight:400;color:#000;letter-spacing:0px;">1,00</div>
<div class="t" style="right:321px;top:792.69px;font-size:11px;line-height:14px;font-weight:400;color:#000;letter-spacing:-0.1px;">16 700,00 ₽</div>
<div class="r" style="left:342px;top:816px;width:1028px;height:21px;background:#e2d2bd"></div>
<div class="t" style="right:396px;top:820.19px;font-size:11px;line-height:14px;font-weight:700;color:#000;letter-spacing:0px;">1,00</div>
<div class="t" style="right:321px;top:820.19px;font-size:11px;line-height:14px;font-weight:700;color:#000;letter-spacing:-0.1px;">16 700,00 ₽</div>
<div class="t" style="left:1132px;top:838.19px;font-size:11px;line-height:14px;font-weight:700;color:#000;letter-spacing:-0.45px;">ИТОГО:</div>
<div class="t" style="right:447.5px;top:838.19px;font-size:11px;line-height:14px;font-weight:700;color:#000;letter-spacing:0px;">123,00</div>
<div class="t" style="right:321px;top:838.19px;font-size:11px;line-height:14px;font-weight:700;color:#000;letter-spacing:0.05px;">2 386 425,51 ₽</div>
<div class="r" style="left:341px;top:858px;width:1029px;height:1px;background:#c9be94"></div>
<div class="r" style="left:6px;top:892px;width:1683px;height:2px;background:#f0f0f0"></div>
<div class="r" style="left:8px;top:894px;width:1383px;height:32px;background:#fff;border:1px solid #c6c6c6"></div>
<div class="r" style="left:1391px;top:892px;width:4px;height:35px;background:#f0f0f0"></div>
<div class="r" style="left:1395px;top:894px;width:306px;height:32px;background:#fff;border:1px solid #c6c6c6"></div>
<div class="r" style="left:1382px;top:895px;width:8px;height:30px;background:#f9f9f9"></div>
<svg style="left:1382px;top:916px" width="6" height="6" viewBox="0 0 6 6"><path d="M0.5 0.5H5.5" stroke="#8a93a8" stroke-width="0.8"/><path d="M0 3H6L3 6Z" fill="#8a93a8"/></svg>
<div class="r" style="left:0px;top:926px;width:1689px;height:2px;background:#fff"></div>
<div class="r" style="left:0px;top:928px;width:1689px;height:10px;background:#707070"></div>
<svg style="left:22px;top:904px" width="10" height="12" viewBox="0 0 10 12"><rect x="0" y="0" width="3" height="12" fill="#4a7fbf"/><path d="M9 0V12L3 6Z" fill="#4a7fbf"/></svg>
<svg style="left:48px;top:904px" width="7" height="11" viewBox="0 0 7 11"><path d="M6.5 0V11L0 5.5Z" fill="#4a7fbf"/></svg>
<div class="r" style="left:65px;top:898px;width:1px;height:24px;background:#c8c8c8"></div>
<div class="t" style="left:72px;top:903.19px;font-size:11px;line-height:14px;font-weight:400;color:#444;letter-spacing:0.1px;">Страница 14 из 14</div>
<div class="r" style="left:174px;top:898px;width:1px;height:24px;background:#c8c8c8"></div>
<svg style="left:187px;top:904px" width="7" height="11" viewBox="0 0 7 11"><path d="M0.5 0V11L6.5 5.5Z" fill="#b5cde5"/></svg>
<svg style="left:209px;top:904px" width="9" height="12" viewBox="0 0 9 12"><path d="M0 0V12L6 6Z" fill="#b5cde5"/><rect x="6" y="0" width="3" height="12" fill="#b5cde5"/></svg>
<div class="r" style="left:1402px;top:898px;width:24px;height:24px;background:#95cac0"></div>
<div class="r" style="left:1409px;top:904px;width:10px;height:12px;background:#fff;border:1px solid #a9b8e0"></div>
<svg style="left:1432px;top:903px" width="12" height="13" viewBox="0 0 12 13"><path d="M1.5 1V5.5H10.5V1 M1.5 13V7.5H10.5V13" fill="none" stroke="#a3bcdc" stroke-width="1.1"/></svg>
<svg style="left:1455px;top:903px" width="13" height="13" viewBox="0 0 13 13"><path d="M1.5 1V5.5H5.5V1 M7.5 1V5.5H11.5V1 M1.5 12V7.5H5.5V12 M7.5 12V7.5H11.5V12" fill="none" stroke="#a3bcdc" stroke-width="1.1"/></svg>
<div class="r" style="left:1476px;top:898px;width:1px;height:24px;background:#c8c8c8"></div>
<div class="t" style="left:1497px;top:903.19px;font-size:11px;line-height:14px;font-weight:400;color:#444;letter-spacing:0px;">91%</div>
<div class="r" style="left:1536px;top:909px;width:8px;height:2px;background:#7fbfb0"></div>
<div class="r" style="left:1552px;top:910px;width:120px;height:1px;background:#86c3b6"></div>
<div class="r" style="left:1604px;top:904px;width:3px;height:13px;background:#7fbfb0"></div>
<div class="r" style="left:1612px;top:906px;width:1px;height:8px;background:#9fcfc4"></div>
<div class="r" style="left:1681px;top:909px;width:8px;height:2px;background:#7fbfb0"></div>
<div class="r" style="left:1684px;top:906px;width:2px;height:8px;background:#7fbfb0"></div>
</body></html>
